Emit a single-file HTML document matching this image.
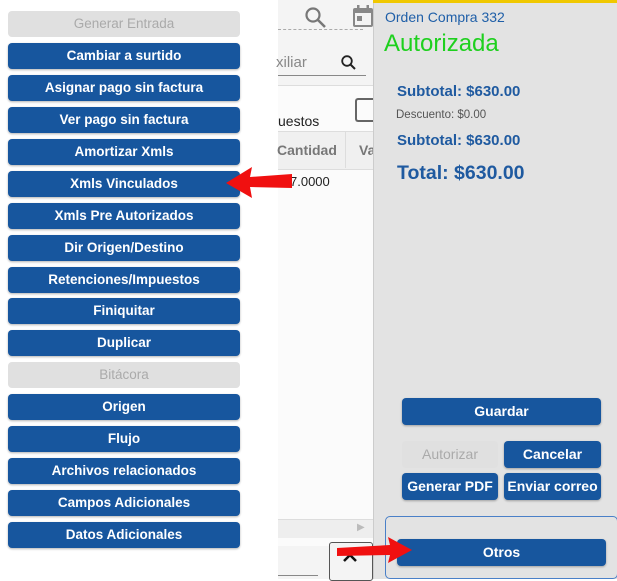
<!DOCTYPE html>
<html><head><style>
body{margin:0;width:617px;height:579px;overflow:hidden;position:relative;background:#fff;font-family:"Liberation Sans",sans-serif}
.b{position:absolute;left:8px;width:232px;height:26px;background:#17569e;color:#fff;border-radius:4px;font-size:13.5px;font-weight:bold;text-align:center;line-height:26px;box-shadow:0 1px 2px rgba(0,0,0,.3)}
.d{background:#e0e0e0;color:#aaa;font-weight:normal;box-shadow:none}
.a{position:absolute}
.rb{position:absolute;height:27px;background:#17569e;color:#fff;border-radius:4px;font-size:14px;font-weight:bold;text-align:center;line-height:27px;box-shadow:0 1px 2px rgba(0,0,0,.3)}
</style></head><body>
<div class="a" style="left:278px;top:0;width:95px;height:579px;background:#f4f4f4"></div>
<div class="a" style="left:278px;top:85px;width:95px;height:460px;background:#fbfbfb;border-top:1px solid #ddd"></div>
<svg class="a" style="left:303px;top:5px" width="24" height="24"><circle cx="10" cy="10" r="6.5" fill="none" stroke="#777" stroke-width="2.2"/><line x1="15" y1="15" x2="22" y2="22" stroke="#777" stroke-width="2.5"/></svg>
<svg class="a" style="left:351px;top:4px" width="24" height="24"><rect x="2" y="4" width="20" height="19" rx="2" fill="#888"/><rect x="4" y="9" width="16" height="12" fill="#f4f4f4"/><rect x="6" y="12" width="5" height="5" fill="#888"/><rect x="6" y="1" width="2.5" height="5" fill="#888"/><rect x="15.5" y="1" width="2.5" height="5" fill="#888"/></svg>
<div class="a" style="left:278px;top:29px;width:85px;border-top:1px dashed #aaa"></div>
<div class="a" style="left:276px;top:54px;font-size:15px;color:#888">xiliar</div>
<svg class="a" style="left:340px;top:54px" width="18" height="18"><circle cx="7" cy="7" r="4.8" fill="none" stroke="#222" stroke-width="1.8"/><line x1="10.5" y1="10.5" x2="15" y2="15" stroke="#222" stroke-width="2"/></svg>
<div class="a" style="left:278px;top:75px;width:88px;border-top:1px solid #888"></div>
<div class="a" style="left:355px;top:98px;width:18px;height:20px;border:2px solid #666;border-right:none;border-radius:3px 0 0 3px"></div>
<div class="a" style="left:278px;top:113px;font-size:14px;color:#222">uestos</div>
<div class="a" style="left:278px;top:131px;width:95px;height:37px;background:#f0f0f0;border-top:1px solid #ddd;border-bottom:1px solid #ddd"></div>
<div class="a" style="left:345px;top:131px;height:37px;border-left:1px solid #ddd"></div>
<div class="a" style="left:277px;top:142px;font-size:14px;font-weight:bold;color:#777">Cantidad</div>
<div class="a" style="left:359px;top:142px;font-size:14px;font-weight:bold;color:#777">Va</div>
<div class="a" style="left:290px;top:174px;font-size:13px;color:#222">7.0000</div>
<div class="a" style="left:278px;top:519px;width:95px;height:18px;background:#eee;border-top:1px solid #ddd"></div>
<div class="a" style="left:357px;top:522px;font-size:10px;color:#bbb">&#9654;</div>
<div class="a" style="left:329px;top:542px;width:42px;height:37px;border:1px solid #555;border-radius:3px;background:#f4f4f4"></div>
<svg class="a" style="left:341px;top:550px" width="18" height="14"><polyline points="3,11 9,5 15,11" fill="none" stroke="#111" stroke-width="2.5"/></svg>
<div class="a" style="left:278px;top:575px;width:40px;border-top:1px solid #888"></div>

<div class="a" style="left:373px;top:0;width:244px;height:579px;background:#e3e3e3;border-left:1px solid #ccc"></div>
<div class="a" style="left:373px;top:0;width:244px;height:3px;background:#f0c800"></div>
<div class="a" style="left:385px;top:9px;font-size:14px;color:#1f5fa8">Orden Compra 332</div>
<div class="a" style="left:384px;top:30px;font-size:24px;color:#1ed01e">Autorizada</div>
<div class="a" style="left:397px;top:83px;font-size:15px;font-weight:bold;color:#1f5aa0">Subtotal: $630.00</div>
<div class="a" style="left:396px;top:109px;font-size:11.5px;color:#555">Descuento: $0.00</div>
<div class="a" style="left:397px;top:132px;font-size:15px;font-weight:bold;color:#1f5aa0">Subtotal: $630.00</div>
<div class="a" style="left:397px;top:162px;font-size:19.5px;font-weight:bold;color:#1f5aa0">Total: $630.00</div>
<div class="rb" style="left:402px;top:398px;width:199px">Guardar</div>
<div class="rb" style="left:402px;top:441px;width:96px;background:#e0e0e0;color:#aaa;font-weight:normal;box-shadow:none">Autorizar</div>
<div class="rb" style="left:504px;top:441px;width:97px">Cancelar</div>
<div class="rb" style="left:402px;top:473px;width:96px">Generar PDF</div>
<div class="rb" style="left:504px;top:473px;width:97px">Enviar correo</div>
<div class="a" style="left:385px;top:516px;width:231px;height:61px;border:1px solid #4a80c8;border-radius:5px"></div>
<div class="rb" style="left:397px;top:539px;width:209px">Otros</div>

<div class="b d" style="top:11px">Generar Entrada</div>
<div class="b" style="top:43px">Cambiar a surtido</div>
<div class="b" style="top:75px">Asignar pago sin factura</div>
<div class="b" style="top:107px">Ver pago sin factura</div>
<div class="b" style="top:139px">Amortizar Xmls</div>
<div class="b" style="top:171px">Xmls Vinculados</div>
<div class="b" style="top:203px">Xmls Pre Autorizados</div>
<div class="b" style="top:235px">Dir Origen/Destino</div>
<div class="b" style="top:267px">Retenciones/Impuestos</div>
<div class="b" style="top:298px">Finiquitar</div>
<div class="b" style="top:330px">Duplicar</div>
<div class="b d" style="top:362px">Bitácora</div>
<div class="b" style="top:394px">Origen</div>
<div class="b" style="top:426px">Flujo</div>
<div class="b" style="top:458px">Archivos relacionados</div>
<div class="b" style="top:490px">Campos Adicionales</div>
<div class="b" style="top:522px">Datos Adicionales</div>

<svg class="a" style="left:0;top:0" width="617" height="579">
<polygon points="226,183 252,167 250,177 292,174 292,188 250,187 252,198" fill="#f01010"/>
<polygon points="412,550 388,537 390,545 337,548 337,556 390,555 388,563" fill="#f01010"/>
</svg>
</body></html>
